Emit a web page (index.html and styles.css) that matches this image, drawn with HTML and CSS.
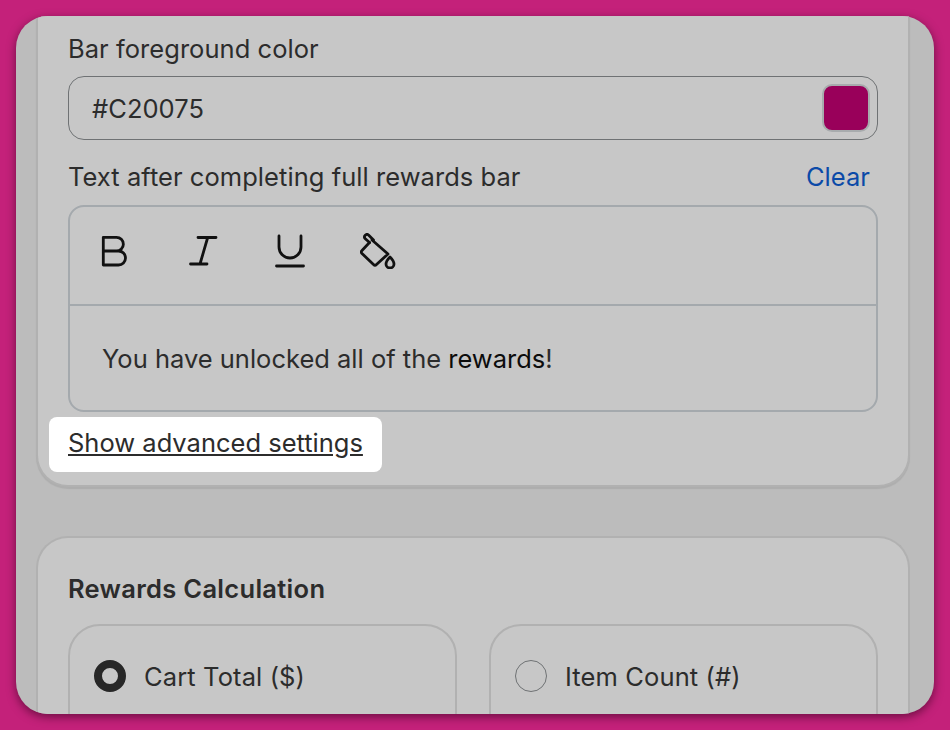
FILE: index.html
```html
<!DOCTYPE html>
<html lang="en">
<head>
<meta charset="utf-8">
<title>Rewards settings</title>
<link rel="stylesheet" href="styles.css">
</head>
<body>
<main class="window">
  <section class="card card-top">
    <label class="label">Bar foreground color</label>
    <div class="color-input">
      <span class="color-value">#C20075</span>
      <span class="swatch"></span>
    </div>
    <div class="label-row">
      <span class="label">Text after completing full rewards bar</span>
      <a class="clear">Clear</a>
    </div>
    <div class="editor">
      <div class="toolbar">
        <svg class="tool" viewBox="0 0 36 36"><path d="M6.300 18H19.500a6.850 6.850 0 0 0 0-13.700H6.300V32H21.500a7 7 0 0 0 0-14"/></svg>
        <svg class="tool" viewBox="0 0 36 36"><path d="M13 4.500H31M22.700 4.500 15 31M5.500 31H22"/></svg>
        <svg class="tool" viewBox="0 0 36 36"><path d="M7 3V14a11 11 0 0 0 22 0V3M4.500 33H31.500"/></svg>
        <svg class="tool" viewBox="0 0 36 36"><path d="M12 7 28 21 16.500 31.500Q15 33 13.500 31.500L2 20.500Q.5 19 2 17.500L9.500 9.500"/><path d="M5 5.500A2.500 2.500 0 0 1 8.500 2L13.500 7M5 5.500 9.500 9.500"/><path d="M30 24Q34 28 34 31A4 4 0 0 1 26 31Q26 28 30 24Z"/></svg>
      </div>
      <p class="editor-text">You have unlocked all of the <span class="dark">rewards</span>!</p>
    </div>
    <a class="advanced"><span class="advanced-link">Show advanced settings</span></a>
  </section>
  <section class="card card-bottom">
    <h2 class="heading">Rewards Calculation</h2>
    <div class="options">
      <div class="option"><span class="radio radio-on"></span><span class="option-label">Cart Total ($)</span></div>
      <div class="option"><span class="radio"></span><span class="option-label">Item Count (#)</span></div>
    </div>
  </section>
</main>
</body>
</html>
```
FILE: styles.css
```css
* { box-sizing: border-box; }
html, body { height: 100%; }
body {
  margin: 0;
  padding: 16px;
  background: #c4217a;
  font-family: Inter, "Liberation Sans", sans-serif;
  font-size: 25.500px;
  letter-spacing: 0.05px;
  color: #2c2c2c;
  overflow: hidden;
}
.window {
  width: 918px;
  height: 698px;
  padding: 0 24px 0 20px;
  background: #bcbcbc;
  border-radius: 32px;
  overflow: hidden;
  box-shadow: 0 3px 10px rgba(50, 0, 30, 0.6);
}
.card {
  background: #c7c7c7;
  border: 2px solid #b1b1b1;
  padding: 0 30px;
}
.card-top {
  height: 471px;
  border-top: 0;
  border-radius: 0 0 32px 32px;
  box-shadow: 0 2px 1px rgba(0, 0, 0, 0.08);
  padding-top: 18px;
}
.card-bottom {
  margin-top: 49px;
  height: 240px;
  border-bottom: 0;
  border-radius: 32px 32px 0 0;
  padding-top: 36px;
}
.label { display: block; line-height: 30px; }
.color-input {
  display: flex;
  align-items: center;
  justify-content: space-between;
  height: 64px;
  margin-top: 12px;
  padding: 0 7px 0 23px;
  border: 1px solid #6f7274;
  border-radius: 16px;
}
.swatch {
  width: 48px;
  height: 48px;
  background: #99005a;
  border: 2px solid #a8abad;
  border-radius: 10px;
}
.label-row {
  display: flex;
  justify-content: space-between;
  margin-top: 22px;
  padding-right: 8px;
}
.clear { color: #0b4aa8; line-height: 30px; }
.editor {
  height: 207px;
  margin-top: 13px;
  border: 2px solid #a4a9ad;
  border-radius: 16px;
}
.toolbar {
  display: flex;
  align-items: center;
  gap: 51.500px;
  height: 99px;
  padding: 0 0 9px 27px;
  border-bottom: 2px solid #a4a9ad;
}
.tool {
  width: 36px;
  height: 36px;
  fill: none;
  stroke: #111111;
  stroke-width: 2.800;
  stroke-linecap: round;
  stroke-linejoin: round;
}
.editor-text { margin: 0; padding: 38px 32px 0; line-height: 30px; letter-spacing: 0; }
.dark { color: #0c0c0c; }
.advanced {
  display: block;
  width: 333px;
  height: 55px;
  margin: 5px 0 0 -19px;
  padding: 11px 0 0 19px;
  background: #ffffff;
  border-radius: 8px;
  line-height: 30px;
  letter-spacing: 0;
}
.advanced-link { text-decoration: underline; }
.heading { margin: 0; font-size: 25.500px; font-weight: 600; line-height: 30px; letter-spacing: 0.3px; }
.options {
  display: grid;
  grid-template-columns: 389px 389px;
  gap: 32px;
  margin-top: 20px;
}
.option {
  display: flex;
  align-items: center;
  gap: 18px;
  height: 120px;
  padding: 0 24px 16px;
  border: 2px solid #b1b1b1;
  border-radius: 32px;
}
.option-label { letter-spacing: 0.12px; }
.radio {
  width: 32px;
  height: 32px;
  border: 1px solid #6f7274;
  border-radius: 50%;
}
.radio-on { border: 8.500px solid #272727; }
```
